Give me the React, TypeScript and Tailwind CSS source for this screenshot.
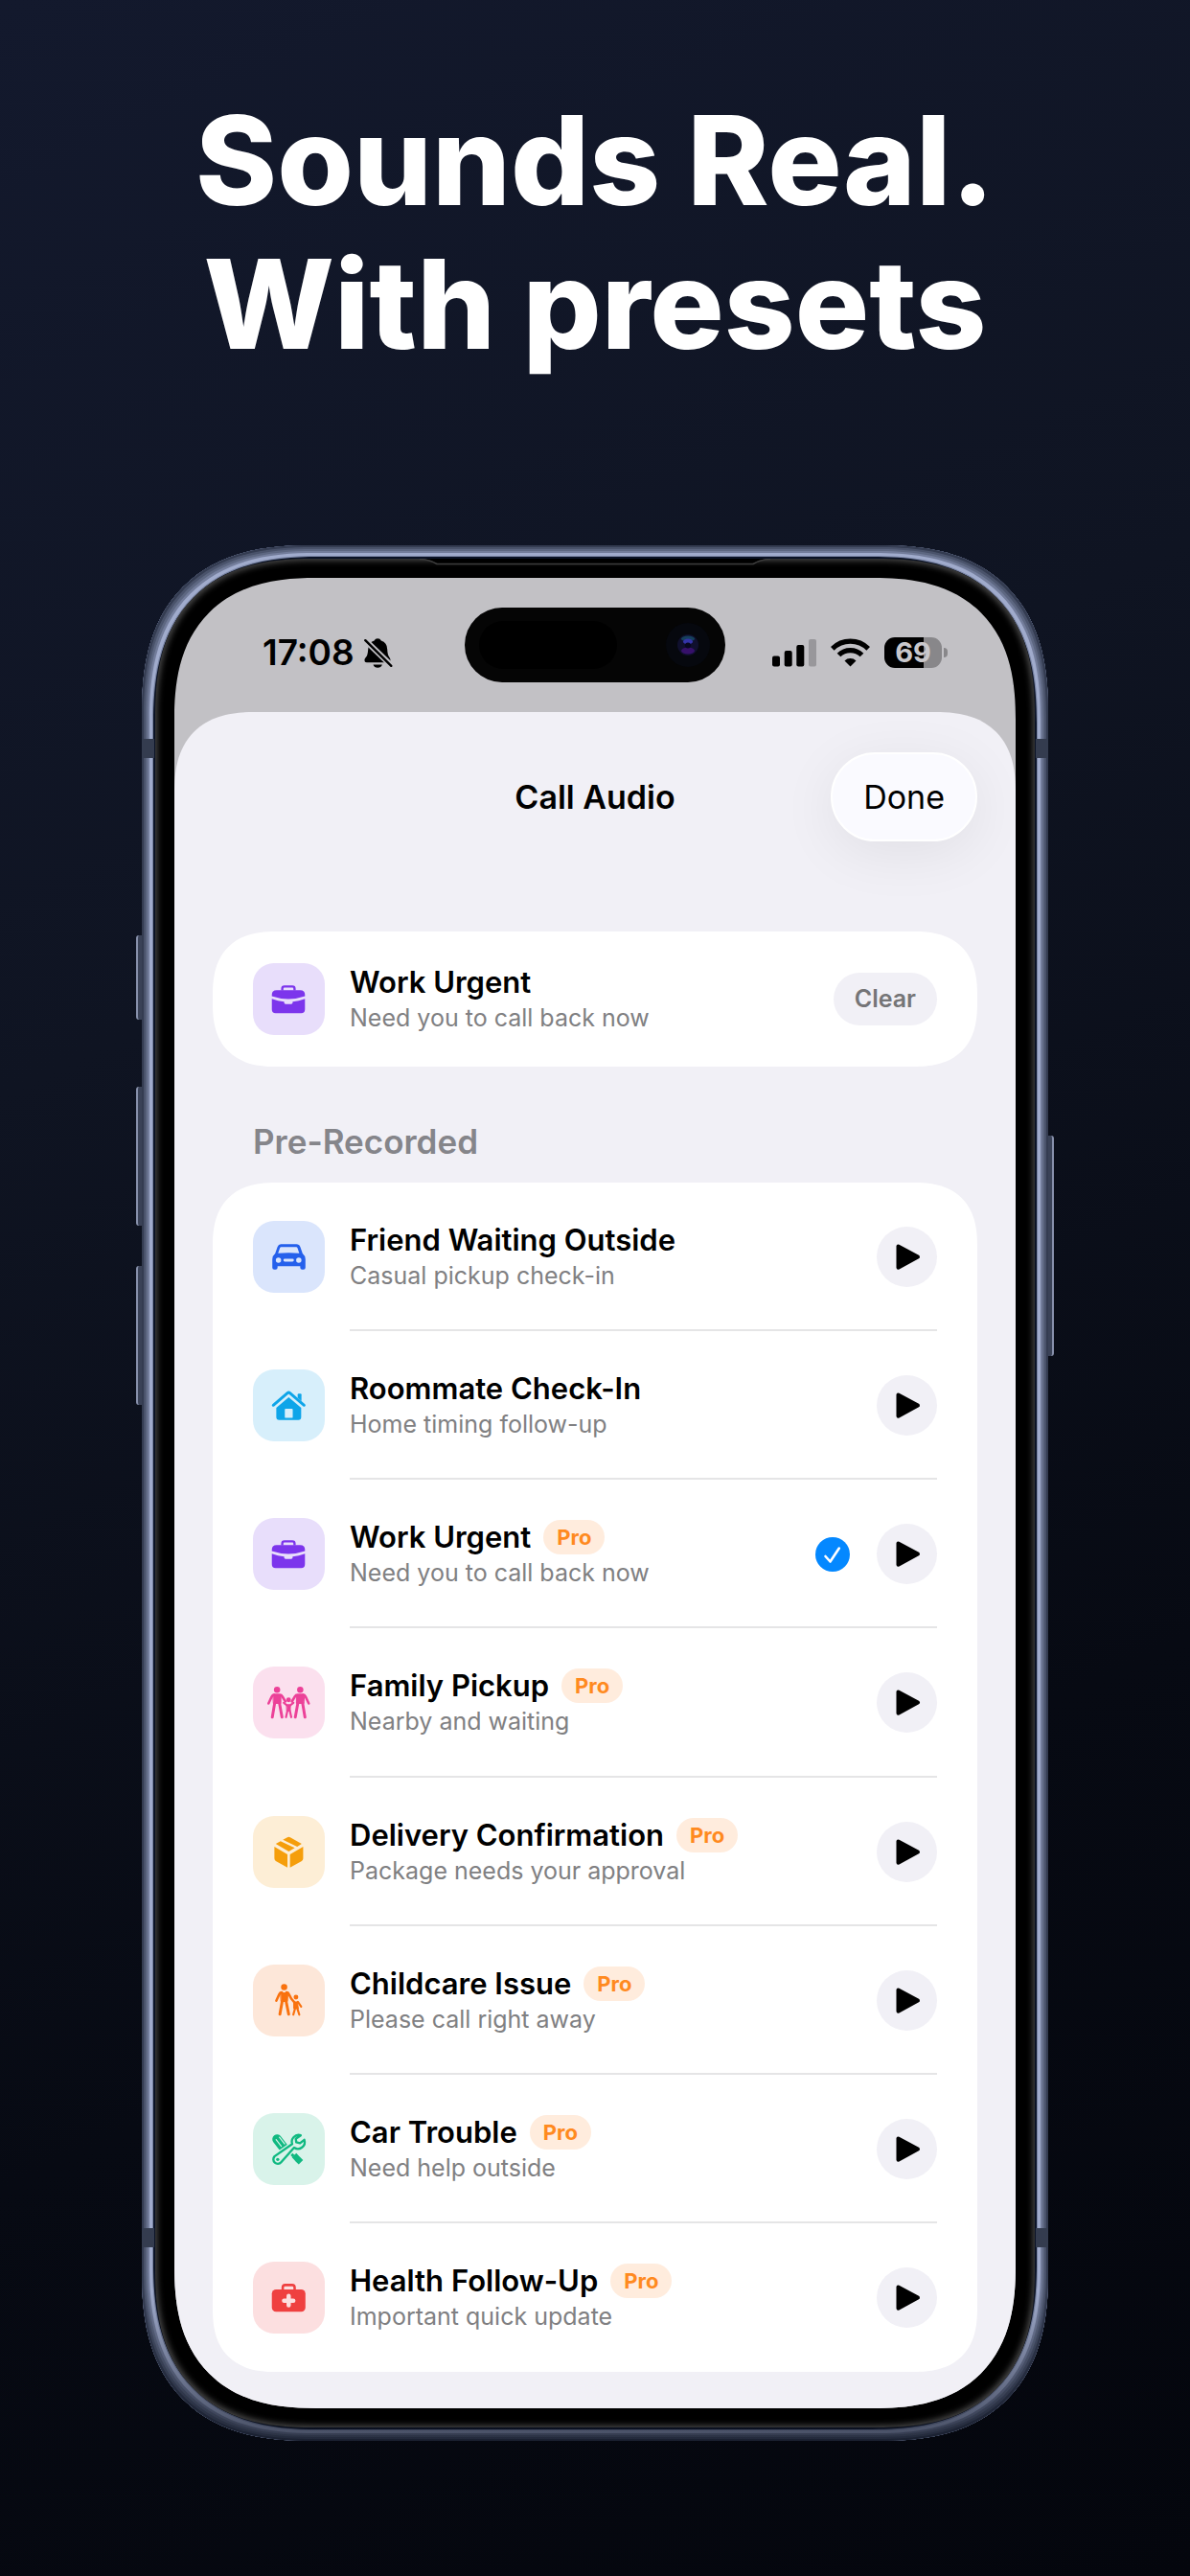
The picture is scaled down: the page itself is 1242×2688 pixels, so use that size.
import type { ReactNode } from "react";

interface Preset {
  title: string;
  subtitle: string;
  icon: ReactNode;
  tile: string;
  pro?: boolean;
  selected?: boolean;
}

const BriefcaseIcon = () => (
  <svg viewBox="0 0 76 76" className="size-full" fill="#7c35ec" aria-hidden="true">
    <path d="M31 29v-2q0-2.3 2.3-2.3h8.4q2.3 0 2.3 2.3v2" fill="none" stroke="#7c35ec" strokeWidth="2.4" />
    <path d="M20 35v-1.5q0-5 5-5h25q5 0 5 5V35q-17.5 6-35 0z" />
    <path d="M20 37.8q6.5 2.3 13 3v1q0 1.5 1.5 1.5h6q1.5 0 1.5-1.5v-1q6.5-.7 13-3V49q0 4-4 4H24q-4 0-4-4z" />
  </svg>
);

const CarIcon = () => (
  <svg viewBox="0 0 76 76" className="size-full" fill="#2560ec" aria-hidden="true">
    <path
      fillRule="evenodd"
      d="M29.5 24.5h16.5q3 0 4 2.8l2.5 7.2q3 2.5 3 6v9q0 2-2 2h-1.5q-2 0-2-2v-1.7h-24v1.7q0 2-2 2h-1.5q-2 0-2-2v-9q0-3.5 3-6l2.5-7.2q1-2.8 3.5-2.8zM29.8 27.5q-.9 0-1.2.9l-2 5.8q11.2-1.2 22.4 0l-2-5.8q-.3-.9-1.2-.9zM27 38.7a2.8 2.8 0 1 0 0 5.6 2.8 2.8 0 1 0 0-5.6zM48.5 38.7a2.8 2.8 0 1 0 0 5.6 2.8 2.8 0 1 0 0-5.6zM33.7 40a1.5 1.5 0 0 0 0 3h8.1a1.5 1.5 0 0 0 0-3z"
    />
  </svg>
);

const HouseIcon = () => (
  <svg viewBox="0 0 76 76" className="size-full" fill="#0ea5e9" aria-hidden="true">
    <path d="M21.5 37.8 36.5 25q1.3-1.1 2.6 0l15 12.8" fill="none" stroke="#0ea5e9" strokeWidth="3" strokeLinecap="round" />
    <path d="M47.3 30v-3.5q0-1 1-1h2q1 0 1 1v7z" />
    <path
      fillRule="evenodd"
      d="M37.8 29.5 51 40.5v10q0 3-3 3H27.7q-3 0-3-3v-10zM34.6 41.5q-.9 0-.9.9v7.9q0 .9.9.9h6.6q.9 0 .9-.9v-7.9q0-.9-.9-.9z"
    />
  </svg>
);

const FamilyIcon = () => (
  <svg viewBox="0 0 76 76" className="size-full" fill="#ec4198" stroke="#ec4198" strokeLinecap="round" strokeLinejoin="round" aria-hidden="true">
    <g strokeWidth="0">
      <circle cx="25.5" cy="24.5" r="3.3" />
      <circle cx="50" cy="24.5" r="3.3" />
      <circle cx="37.7" cy="35.3" r="2.5" />
    </g>
    <g strokeWidth="1">
      <path d="M22.5 30h6q1.7 0 2.6 1.7l3.2 5.3M53 30h-6q-1.7 0-2.6 1.7L41.2 37" fill="none" strokeWidth="2.6" />
      <path d="M22.5 30q-1.7 0-2.6 1.7l-3.4 7.3M53 30q1.7 0 2.6 1.7l3.4 7.3" fill="none" strokeWidth="2.6" />
      <path d="M21.5 30.5h8v8.5h-7.5zM54 30.5h-8v8.5h7.5z" />
      <path d="m23 38.5-2.5 15M28 38.5l2.7 15M52.5 38.5l2.5 15M47.5 38.5l-2.7 15" fill="none" strokeWidth="3" />
      <path d="m32.7 38.3 3.2 2.7h3.6l3.2-2.7M36.5 46.5l-1.5 7M39 46.5l1.5 7" fill="none" strokeWidth="2.2" />
      <path d="M35.8 40.5h3.9l-.3 6.5h-3.3z" />
    </g>
  </svg>
);

const BoxIcon = () => (
  <svg viewBox="0 0 76 76" className="size-full" fill="#f59e0b" aria-hidden="true">
    <path d="M22.7 32.5 36.5 40.5V54.5L24.2 47.5q-1.5-.9-1.5-2.6zM53.1 32.5 39.2 40.5V54.5l12.4-7q1.5-.9 1.5-2.6z" />
    <path d="M36.4 22.5q1.5-.8 3 0L51.5 29.5l-4.7 2.8L31.7 25.2zM29.2 26.5l15 7.2-6.3 3.8-13.8-8z" />
  </svg>
);

const ChildcareIcon = () => (
  <svg viewBox="0 0 76 76" className="size-full" fill="#f9720f" stroke="#f9720f" strokeLinecap="round" strokeLinejoin="round" aria-hidden="true">
    <circle cx="33" cy="23.8" r="3.3" strokeWidth="0" />
    <circle cx="45.5" cy="34.5" r="2.5" strokeWidth="0" />
    <path d="M30.5 29.5q-1.7 0-2.6 1.7l-3.2 7M35.5 29.5q1.7 0 2.5 1.7l2.5 4.8 3 3.5" fill="none" strokeWidth="2.6" />
    <path d="M29.5 30h7.5l-.5 9h-6.5z" strokeWidth="1" />
    <path d="m31 38.5-2.5 14M35 38.5l2.8 14" fill="none" strokeWidth="3" />
    <path d="M43.5 39.5h3.5l1 7h-4.5z" strokeWidth="1" />
    <path d="m47.5 39.5 3.5 5M44.5 46.5l-1.8 6.5M47 46.5l2 6.5" fill="none" strokeWidth="2.2" />
  </svg>
);

const ToolsIcon = () => (
  <svg viewBox="0 0 76 76" className="size-full" fill="none" stroke="#10b981" aria-hidden="true">
    <path d="m25.5 27.5 6.5 8.5" strokeWidth="10" strokeLinecap="round" />
    <path d="m24.5 28 5.5 7M28 25.5l5.5 7" stroke="#d9f3ea" strokeWidth="1.2" strokeLinecap="round" />
    <path d="m34 37 9 8.5" strokeWidth="3" />
    <path d="m43.5 44.5 3.7 4 3.5 3.5" strokeWidth="6.5" strokeLinejoin="round" />
    <path
      d="M50.5 23.5a7.2 7.2 0 0 0-9 9.2L22.8 45.7a4.7 4.7 0 1 0 7 6.3L43.5 36.5a7.2 7.2 0 0 0 10.8-8.3l-4.5 3.6-4-1-.5-3.7z"
      fill="#d9f3ea"
      stroke="#d9f3ea"
      strokeWidth="5"
    />
    <path
      d="M50.5 23.5a7.2 7.2 0 0 0-9 9.2L22.8 45.7a4.7 4.7 0 1 0 7 6.3L43.5 36.5a7.2 7.2 0 0 0 10.8-8.3l-4.5 3.6-4-1-.5-3.7z"
      strokeWidth="2.4"
      strokeLinejoin="round"
    />
    <circle cx="26.2" cy="49" r="1.7" fill="#10b981" stroke="none" />
  </svg>
);

const MedkitIcon = () => (
  <svg viewBox="0 0 76 76" className="size-full" fill="#ef4040" aria-hidden="true">
    <path d="M31.5 30v-2.7q0-2.6 2.6-2.6h7.4q2.6 0 2.6 2.6V30" fill="none" stroke="#ef4040" strokeWidth="2.6" />
    <rect x="20" y="29.3" width="35.5" height="23.7" rx="4.5" />
    <path d="M37.8 36.3v9.8M32.9 41.2h9.8" stroke="#fcdfe0" strokeWidth="4.6" strokeLinecap="round" />
  </svg>
);

const BellOffIcon = () => (
  <svg viewBox="0 0 30 31" className="w-[30px]" aria-hidden="true">
    <path d="M14.2.2q2.6 0 3.6 2.2 6.2 1.8 6.4 9 .2 6 2.3 8.6 1 1.3 1 3 0 2.3-2.4 2.3H2.7Q.4 25.3.4 23q0-1.7 1.3-3Q4 17.5 4.2 11.4q.2-7.2 6.4-9 1-2.2 3.6-2.2zM9.5 27.5h9.4q-1.2 3.3-4.7 3.3t-4.7-3.3z" />
    <path d="m0 1 29 28" stroke="#c2c1c5" strokeWidth="6" />
    <path d="m1.3 2.2 27 26.6" stroke="#000" strokeWidth="2.4" strokeLinecap="round" />
  </svg>
);

const SignalIcon = () => (
  <svg viewBox="0 0 46 30" className="w-[46px]" aria-hidden="true">
    <rect x="0" y="18.5" width="8" height="11" rx="2" />
    <rect x="12.7" y="13" width="8" height="16.5" rx="2" />
    <rect x="25.3" y="7" width="8" height="22.5" rx="2" />
    <rect x="38" y="1" width="8" height="28.5" rx="2" fill="#98979b" />
  </svg>
);

const WifiIcon = () => (
  <svg viewBox="0 0 41 30" className="w-[41px]" fill="none" stroke="#000" strokeWidth="5.2" aria-hidden="true">
    <path d="M1.8 10.8a26.5 26.5 0 0 1 37.4 0" />
    <path d="M8.5 17.5a17 17 0 0 1 24 0" />
    <path d="M20.5 29.5l-6-6a8.5 8.5 0 0 1 12 0z" fill="#000" stroke="none" />
  </svg>
);

const PlayIcon = () => (
  <svg viewBox="0 0 63 63" className="size-full" aria-hidden="true">
    <path d="M22.5 20.5v22.3L43 31.6z" stroke="#000" strokeWidth="4" strokeLinejoin="round" />
  </svg>
);

const CheckIcon = () => (
  <svg viewBox="0 0 36 36" className="size-9 shrink-0" role="img" aria-label="Selected">
    <circle cx="18" cy="18" r="18" fill="#0488ff" />
    <path d="m10.5 20 5 5.5L24.8 11.5" fill="none" stroke="#fff" strokeWidth="2.6" strokeLinecap="round" strokeLinejoin="round" />
  </svg>
);

const presets: Preset[] = [
  { title: "Friend Waiting Outside", subtitle: "Casual pickup check-in", icon: <CarIcon />, tile: "bg-[#dae5fc]" },
  { title: "Roommate Check-In", subtitle: "Home timing follow-up", icon: <HouseIcon />, tile: "bg-[#d7effb]" },
  { title: "Work Urgent", subtitle: "Need you to call back now", icon: <BriefcaseIcon />, tile: "bg-[#e8defb]", pro: true, selected: true },
  { title: "Family Pickup", subtitle: "Nearby and waiting", icon: <FamilyIcon />, tile: "bg-[#fbe0ee]", pro: true },
  { title: "Delivery Confirmation", subtitle: "Package needs your approval", icon: <BoxIcon />, tile: "bg-[#fdeed6]", pro: true },
  { title: "Childcare Issue", subtitle: "Please call right away", icon: <ChildcareIcon />, tile: "bg-[#fde7d9]", pro: true },
  { title: "Car Trouble", subtitle: "Need help outside", icon: <ToolsIcon />, tile: "bg-[#d9f3ea]", pro: true },
  { title: "Health Follow-Up", subtitle: "Important quick update", icon: <MedkitIcon />, tile: "bg-[#fcdfe0]", pro: true },
];

const PresetInfo = ({ title, subtitle, icon, tile, pro }: Preset) => (
  <>
    <div className={`size-[75px] shrink-0 rounded-[22px] ${tile}`}>{icon}</div>
    <div className="min-w-0 flex-1 pt-[2px]">
      <div className="flex items-center gap-[13px]">
        <h3 className="truncate text-[31px] leading-[38px] font-semibold text-black">{title}</h3>
        {pro && (
          <span className="rounded-full bg-[#ffecdd] px-[14px] text-[22px] leading-[36px] font-bold text-[#ff8a1f]">Pro</span>
        )}
      </div>
      <p className="truncate text-[25px] leading-[37px] text-[#808082]">{subtitle}</p>
    </div>
  </>
);

const StatusBar = () => (
  <div className="grid h-[140px] grid-cols-[1fr_auto_1fr] items-center">
    <div className="flex items-center gap-[10px] pt-4 pl-[92px]">
      <span className="text-[37px] leading-[44px] font-semibold">17:08</span>
      <BellOffIcon />
    </div>
    <div className="flex h-[78px] w-[272px] items-center justify-between rounded-full bg-[#050505] pr-4 pl-[15px]">
      <div className="h-[50px] w-[144px] rounded-full bg-black" />
      <div className="flex size-[46px] items-center justify-center rounded-full bg-[#06080e]">
        <svg viewBox="0 0 24 24" className="w-6" aria-hidden="true">
          <circle cx="12" cy="12" r="11" fill="#10102e" />
          <ellipse cx="12" cy="5.5" rx="7" ry="3" fill="#15405c" />
          <ellipse cx="12" cy="8.5" rx="5" ry="3" fill="#3434a8" />
          <ellipse cx="12" cy="18" rx="7" ry="3.5" fill="#36106a" />
          <circle cx="12" cy="12.5" r="3" fill="#080820" />
        </svg>
      </div>
    </div>
    <div className="flex items-center justify-end gap-[15px] pt-4 pr-[71px]">
      <SignalIcon />
      <WifiIcon />
      <div className="flex items-center gap-[2px]">
        <div className="h-8 w-[60px] rounded-[11px] bg-[linear-gradient(90deg,#000_69%,#88878a_69%)] text-center text-[29px] leading-[32px] font-bold text-[#c9c8cc]">
          69
        </div>
        <div className="h-[10px] w-1 rounded-r-full bg-[#88878a]" />
      </div>
    </div>
  </div>
);

const PhoneFrame = ({ children }: { children: ReactNode }) => (
  <div className="relative flex aspect-[946/1978] flex-col">
    {/* side buttons */}
    <div className="absolute top-[407px] -left-[6px] h-[88px] w-2 rounded-l-[3px] border-l-2 border-[#8790ab] bg-[#3a4257]" />
    <div className="absolute top-[565px] -left-[6px] h-[145px] w-2 rounded-l-[3px] border-l-2 border-[#8790ab] bg-[#3a4257]" />
    <div className="absolute top-[752px] -left-[6px] h-[145px] w-2 rounded-l-[3px] border-l-2 border-[#8790ab] bg-[#3a4257]" />
    <div className="absolute top-[616px] -right-[6px] h-[230px] w-2 rounded-r-[3px] border-r-2 border-[#8790ab] bg-[#3a4257]" />

    <div className="relative flex flex-1 flex-col rounded-[176px] bg-[#0b1326] p-[14px] shadow-[inset_0_0_0_2px_#343c51,inset_0_0_0_4px_#4a536b,inset_0_0_0_6px_#5d6781,inset_0_0_0_8px_#737d9b,inset_0_0_0_11px_#a0abcc,inset_0_0_0_12px_#7681a0] [corner-shape:superellipse(1.3)]">
      <div className="absolute inset-0 rounded-[176px] bg-[linear-gradient(180deg,transparent_92%,#0a0f1c99_100%)] [corner-shape:superellipse(1.3)]" />
      {/* antenna bands */}
      <div className="absolute top-[202px] left-0 h-5 w-[13px] bg-[#343c4f]" />
      <div className="absolute top-[202px] right-0 h-5 w-[13px] bg-[#343c4f]" />
      <div className="absolute bottom-[202px] left-0 h-5 w-[13px] bg-[#343c4f]" />
      <div className="absolute right-0 bottom-[202px] h-5 w-[13px] bg-[#343c4f]" />

      <div className="relative flex flex-1 flex-col rounded-[164px] bg-black p-5 shadow-[inset_0_0_6px_2px_#4a4a4a] [corner-shape:superellipse(1.3)]">
        <svg viewBox="0 0 366 10" className="absolute top-0 left-1/2 w-[366px] -translate-x-1/2" aria-hidden="true">
          <path d="M0 0q10 0 18 5h330q8-5 18-5z" />
          <path d="M0 .5q10 0 18 5h330q8-5 18-5" fill="none" stroke="#3d3d3d" strokeWidth="1.5" />
        </svg>
        <div className="flex flex-1 flex-col overflow-hidden rounded-[148px] bg-[#c2c1c5] [corner-shape:superellipse(1.3)]">
          {children}
        </div>
      </div>
    </div>
  </div>
);

export default function App() {
  const current = presets[2];

  return (
    <main className="min-h-screen bg-[linear-gradient(155deg,#13192d_0%,#0f1422_35%,#070a13_70%,#04060d_100%)] px-[148px] pt-[92px] pb-[141px] font-['Inter','Liberation_Sans',sans-serif] text-black">
      <h1 className="text-center text-[129px] leading-[150px] font-extrabold whitespace-nowrap text-white">
        Sounds Real.
        <br />
        With presets
      </h1>

      <div className="pt-[177px]">
        <PhoneFrame>
          <StatusBar />
          <section className="flex flex-1 flex-col rounded-t-[84px] bg-[#f1f0f6] px-10 pt-[42px] pb-[38px] [corner-shape:superellipse(1.3)]">
            <header className="grid grid-cols-[1fr_auto_1fr] items-center">
              <h2 className="col-start-2 text-[34px] leading-[44px] font-semibold">Call Audio</h2>
              <button
                type="button"
                className="justify-self-end rounded-full border-2 border-white bg-[#fafaff] px-8 py-[24px] text-[34px] leading-[41px] shadow-[0_12px_60px_rgba(0,0,0,0.07)]"
              >
                Done
              </button>
            </header>

            <div className="mt-[94px] flex items-center gap-[26px] rounded-[66px] bg-white px-[42px] py-[32px] [corner-shape:superellipse(1.3)]">
              <PresetInfo {...current} pro={false} />
              <button type="button" className="rounded-full bg-[#f1f0f6] px-[22px] text-[25px] leading-[55px] font-semibold text-[#757577]">
                Clear
              </button>
            </div>

            <h2 className="mt-[56px] px-[42px] text-[35px] leading-[44px] font-semibold text-[#85858a]">Pre-Recorded</h2>

            <ul className="mt-[21px] grid flex-1 auto-rows-fr rounded-[66px] bg-white px-[42px] [corner-shape:superellipse(1.3)]">
              {presets.map((preset, i) => (
                <li key={preset.title} className="relative flex items-center gap-[26px] py-[39px]">
                  <PresetInfo {...preset} />
                  <div className="flex items-center gap-7">
                    {preset.selected && <CheckIcon />}
                    <button type="button" aria-label={`Play ${preset.title}`} className="size-[63px] rounded-full bg-[#f1f0f6]">
                      <PlayIcon />
                    </button>
                  </div>
                  {i < presets.length - 1 && <hr className="absolute right-0 bottom-0 left-[101px] border-t-2 border-[#e5e5e6]" />}
                </li>
              ))}
            </ul>
          </section>
        </PhoneFrame>
      </div>
    </main>
  );
}
